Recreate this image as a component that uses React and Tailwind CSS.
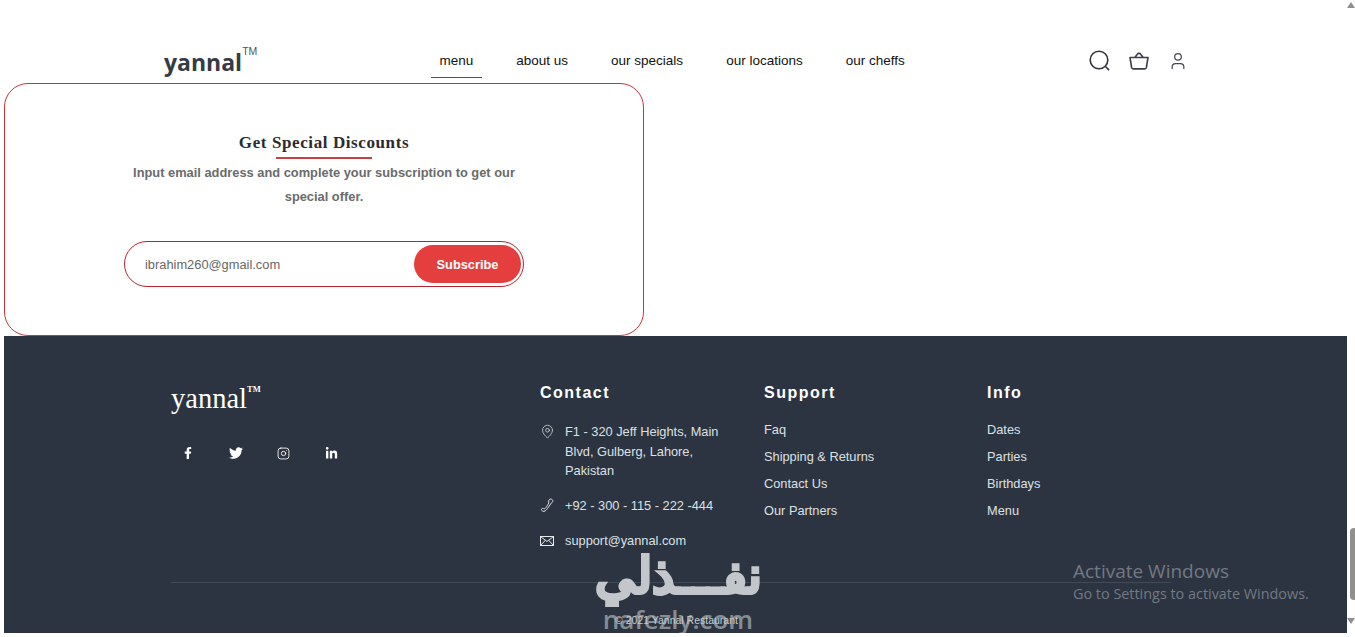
import React from "react";
import { User, MapPin, Instagram } from "lucide-react";
import { FaFacebookF, FaTwitter, FaLinkedinIn } from "react-icons/fa";

const navItems = ["menu", "about us", "our specials", "our locations", "our cheffs"];
const supportLinks = ["Faq", "Shipping & Returns", "Contact Us", "Our Partners"];
const infoLinks = ["Dates", "Parties", "Birthdays", "Menu"];

const BasketIcon = () => (
  <svg width="20" height="18" viewBox="0 0 20 18" fill="none" stroke="#3b3f46" strokeWidth="1.6" strokeLinejoin="round" strokeLinecap="round">
    <path d="M1 5.5h18l-1.6 10a1.6 1.6 0 0 1-1.6 1.4H4.2a1.6 1.6 0 0 1-1.6-1.4L1 5.5ZM5.8 5.5 9 1.4h2l3.2 4.1" />
  </svg>
);

const HandsetIcon = () => (
  <svg width="15" height="15" viewBox="0 0 15 15" fill="none" stroke="#dde0e3" strokeWidth="1">
    <path d="M10 1.2c1-.6 2.6.4 2.8 1.4.2 1.2-.8 2.2-1.6 2.6L7.6 10.4c-.8 1.2-2 2.6-3.6 3-1.2.2-2.6-.8-2.6-1.8 0-1 1-1.4 1.8-1.2.8.2 1 .8 1.6.4.8-.5 3.4-4.6 4-5.8.3-.8-.4-1-.2-2.2.1-.7.8-1 1.4-1.6Z" />
  </svg>
);

const EnvelopeIcon = () => (
  <svg width="14" height="10" viewBox="0 0 14 10" fill="none" stroke="#e8eaec" strokeWidth="1">
    <rect x="0.5" y="0.5" width="13" height="9" />
    <path d="M0.5 0.5 7 5.5l6.5-5M0.5 9.5l4.8-5.2M13.5 9.5 8.7 4.3" />
  </svg>
);

const App = () => {
  return (
    <div className="relative h-[637px] w-[1355px] overflow-hidden bg-white font-['Liberation_Sans',sans-serif]">
      <div className="ml-1 w-[1343px]">
        {/* top nav */}
        <header className="flex h-[83px] items-start pl-[160px]">
          <div className="mt-[45px] flex w-[267px] items-start font-['Open_Sans',sans-serif] text-[23px] leading-[34px] font-bold text-[#353b45]">
            yannal<span className="mt-[-1px] text-[10.5px] leading-[14px] font-normal font-['Liberation_Sans',sans-serif] text-[#555]">TM</span>
          </div>
          <nav className="mt-[44px] flex w-[658px] gap-[26px] text-[13.5px] text-[#111]">
            {navItems.map((item, i) => (
              <a key={item} className={i === 0 ? "h-[34px] border-b border-[#b3262b] px-[8.5px] pt-[8px] leading-[18px]" : "h-[34px] px-[8.5px] pt-[8px] leading-[18px]"}>
                {item}
              </a>
            ))}
          </nav>
          <div className="mt-[50px] flex items-center gap-[19px]">
            <svg width="21" height="21" viewBox="0 0 21 21" fill="none" stroke="#2f333a" strokeWidth="1.6" strokeLinecap="round">
              <circle cx="10" cy="10" r="8.8" />
              <path d="M17 17 19.6 19.6" />
            </svg>
            <BasketIcon />
            <User size={20} strokeWidth={1.5} color="#44484f" />
          </div>
        </header>

        {/* newsletter card */}
        <section className="flex h-[253px] w-[640px] flex-col items-center rounded-[24px] border border-[#c9343a] pt-[49px]">
          <h2 className="font-['Liberation_Serif',serif] text-[17px] leading-[20px] font-bold tracking-[0.6px] text-[#2b2b2e]">Get Special Discounts</h2>
          <div className="mt-[4px] h-[2px] w-[96px] bg-[#c9403f]"></div>
          <p className="mt-[2px] w-[400px] px-[8px] text-center text-[12.85px] leading-[24px] font-bold text-[#6b6b6b]">
            Input email address and complete your subscription to get our special offer.
          </p>
          <div className="mt-[32px] flex h-[46px] w-[400px] items-center justify-between rounded-full border border-[#b9222a] pr-[2px] pl-[20px]">
            <span className="pt-[1px] text-[12.85px] text-[#666]">ibrahim260@gmail.com</span>
            <button className="h-[38px] w-[107px] rounded-full bg-[#e53e3e] pt-[1px] text-[12.8px] font-bold text-white">Subscribe</button>
          </div>
        </section>

        {/* footer */}
        <footer className="h-[297px] bg-[#2c3441] pl-[167px] text-[12.8px] text-[#dde0e3]">
          <div className="mr-[176px] flex h-[247px] border-b border-[#424a55] pt-[44px]">
            <div className="w-[369px]">
              <div className="flex items-start font-['Liberation_Serif',serif] text-[28.5px] leading-[38px] text-white">
                yannal<span className="mt-[3px] text-[8.5px] leading-[12px] font-bold">TM</span>
              </div>
              <div className="mt-[28px] flex items-center text-white">
                <span className="flex w-[48px] justify-start pl-[11px]"><FaFacebookF size={12} /></span>
                <span className="flex w-[48px] justify-start pl-[10px]"><FaTwitter size={14} /></span>
                <span className="flex w-[48px] justify-start pl-[10px]"><Instagram size={13} strokeWidth={1.6} /></span>
                <span className="flex w-[48px] justify-start pl-[10px]"><FaLinkedinIn size={13} /></span>
              </div>
            </div>
            <div className="w-[224px]">
              <h3 className="mt-[1px] text-[16px] leading-[24px] font-bold tracking-[1.5px] text-white">Contact</h3>
              <div className="mt-[17px] flex gap-[10px]">
                <MapPin size={15} strokeWidth={1.2} className="mt-[2px] shrink-0" />
                <p className="w-[160px] leading-[19.5px]">F1 - 320 Jeff Heights, Main Blvd, Gulberg, Lahore, Pakistan</p>
              </div>
              <div className="mt-[15px] flex items-center gap-[10px] leading-[20px]">
                <HandsetIcon />
                <span>+92 - 300 - 115 - 222 -444</span>
              </div>
              <div className="mt-[15px] flex items-center gap-[11px] leading-[20px]">
                <EnvelopeIcon />
                <span>support@yannal.com</span>
              </div>
            </div>
            <div className="w-[223px]">
              <h3 className="mt-[1px] text-[16px] leading-[24px] font-bold tracking-[1.5px] text-white">Support</h3>
              <ul className="mt-[15px] flex flex-col gap-[7px] leading-[20px]">
                {supportLinks.map((link) => (
                  <li key={link}>{link}</li>
                ))}
              </ul>
            </div>
            <div>
              <h3 className="mt-[1px] text-[16px] leading-[24px] font-bold tracking-[1.5px] text-white">Info</h3>
              <ul className="mt-[15px] flex flex-col gap-[7px] leading-[20px]">
                {infoLinks.map((link) => (
                  <li key={link}>{link}</li>
                ))}
              </ul>
            </div>
          </div>
          <p className="mt-[30px] pl-[444px] text-[10.5px] leading-[14px] text-[#c8ccd0]">© 2021 Yannal Restaurant</p>
        </footer>
      </div>

      {/* scrollbar */}
      <div className="absolute top-0 right-0 h-[637px] w-[8px] bg-white">
        <div className="absolute top-[2px] right-0 h-0 w-0 border-x-[4px] border-b-[6px] border-x-transparent border-b-[#8f8f8f]"></div>
        <div className="absolute top-[528px] right-0 h-[72px] w-[5px] rounded-l bg-[#8f8f8f]"></div>
        <div className="absolute top-[618px] right-0 h-0 w-0 border-x-[4px] border-t-[6px] border-x-transparent border-t-[#8f8f8f]"></div>
      </div>

      {/* watermark */}
      <div className="absolute top-[543px] left-[590px] flex h-[90px] w-[176px] flex-col items-center overflow-hidden text-[#c3c7cc]">
        <span className="font-['Noto_Sans',sans-serif] text-[50px] leading-[62px] font-bold whitespace-nowrap [-webkit-text-stroke:2.5px_#c3c7cc]" dir="rtl">نفـــذلي</span>
        <span className="mt-[-3px] font-['Open_Sans',sans-serif] text-[26px] leading-[34px] font-semibold opacity-60">nafezly.com</span>
      </div>

      {/* activate windows */}
      <div className="absolute top-[559px] left-[1073px] font-['Open_Sans',sans-serif] text-[#737983]">
        <p className="text-[19px] leading-[25px]">Activate Windows</p>
        <p className="text-[14.4px] leading-[20px]">Go to Settings to activate Windows.</p>
      </div>
    </div>
  );
};

export default App;
